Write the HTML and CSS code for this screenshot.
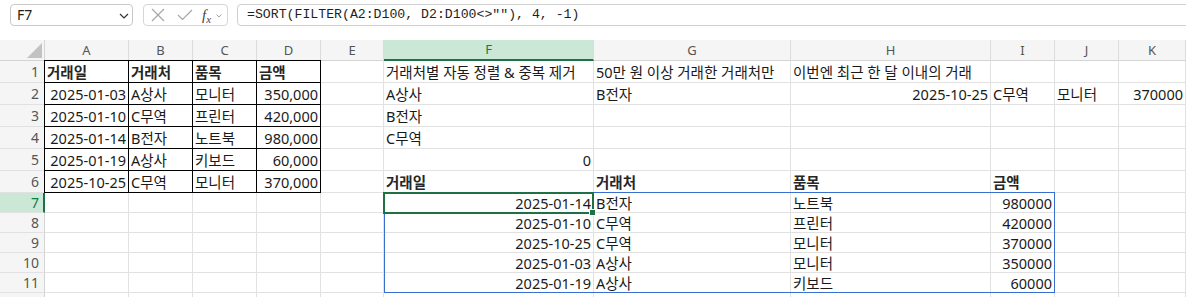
FILE: index.html
```html
<!DOCTYPE html>
<html lang="ko">
<head>
<meta charset="utf-8">
<title>Sheet</title>
<link rel="stylesheet" href="styles.css">
</head>
<body>
<div class="toolbar">
  <div class="namebox">
    <span class="ref">F7</span>
    <svg class="chev" width="10" height="6" viewBox="0 0 10 6"><path d="M1 1 L5 5 L9 1" fill="none" stroke="#333" stroke-width="1.2"/></svg>
  </div>
  <div class="fxbox">
    <svg class="ico" width="14" height="14" viewBox="0 0 14 14"><path d="M1 1 L13 13 M13 1 L1 13" fill="none" stroke="#a6a6a6" stroke-width="1.2"/></svg>
    <svg class="ico" width="16" height="12" viewBox="0 0 16 12"><path d="M1 6 L5.5 10.5 L15 1" fill="none" stroke="#a6a6a6" stroke-width="1.2"/></svg>
    <span class="fx"><span class="fx-f">f</span><span class="fx-x">x</span></span>
    <svg class="mini" width="6" height="4" viewBox="0 0 6 4"><path d="M0.5 0.5 L3 3 L5.5 0.5" fill="none" stroke="#a6a6a6" stroke-width="1"/></svg>
  </div>
  <div class="formula">=SORT(FILTER(A2:D100, D2:D100&lt;&gt;""), 4, -1)</div>
</div>

<div class="sheet">
  <div class="row head">
    <div class="corner"><svg width="15" height="15" viewBox="0 0 15 15"><path d="M15 0 L15 15 L0 15 Z" fill="#c2c2c2"/></svg></div>
    <div class="ch">A</div><div class="ch">B</div><div class="ch">C</div><div class="ch">D</div><div class="ch">E</div>
    <div class="ch active">F</div><div class="ch">G</div><div class="ch">H</div><div class="ch">I</div><div class="ch">J</div><div class="ch">K</div>
  </div>

  <div class="row tall">
    <div class="rh">1</div>
    <div class="cell b tb corner-tl">거래일</div>
    <div class="cell b tb top">거래처</div>
    <div class="cell b tb top">품목</div>
    <div class="cell b tb top">금액</div>
    <div class="cell"></div>
    <div class="cell">거래처별 자동 정렬 &amp; 중복 제거</div>
    <div class="cell">50만 원 이상 거래한 거래처만</div>
    <div class="cell">이번엔 최근 한 달 이내의 거래</div>
    <div class="cell"></div><div class="cell"></div><div class="cell"></div>
  </div>

  <div class="row tall">
    <div class="rh">2</div>
    <div class="cell n tb left">2025-01-03</div>
    <div class="cell tb">A상사</div>
    <div class="cell tb">모니터</div>
    <div class="cell n tb">350,000</div>
    <div class="cell"></div>
    <div class="cell">A상사</div>
    <div class="cell">B전자</div>
    <div class="cell n">2025-10-25</div>
    <div class="cell">C무역</div>
    <div class="cell">모니터</div>
    <div class="cell n">370000</div>
  </div>

  <div class="row tall">
    <div class="rh">3</div>
    <div class="cell n tb left">2025-01-10</div>
    <div class="cell tb">C무역</div>
    <div class="cell tb">프린터</div>
    <div class="cell n tb">420,000</div>
    <div class="cell"></div>
    <div class="cell">B전자</div>
    <div class="cell"></div><div class="cell"></div><div class="cell"></div><div class="cell"></div><div class="cell"></div>
  </div>

  <div class="row tall">
    <div class="rh">4</div>
    <div class="cell n tb left">2025-01-14</div>
    <div class="cell tb">B전자</div>
    <div class="cell tb">노트북</div>
    <div class="cell n tb">980,000</div>
    <div class="cell"></div>
    <div class="cell">C무역</div>
    <div class="cell"></div><div class="cell"></div><div class="cell"></div><div class="cell"></div><div class="cell"></div>
  </div>

  <div class="row tall">
    <div class="rh">5</div>
    <div class="cell n tb left">2025-01-19</div>
    <div class="cell tb">A상사</div>
    <div class="cell tb">키보드</div>
    <div class="cell n tb">60,000</div>
    <div class="cell"></div>
    <div class="cell n">0</div>
    <div class="cell"></div><div class="cell"></div><div class="cell"></div><div class="cell"></div><div class="cell"></div>
  </div>

  <div class="row tall">
    <div class="rh">6</div>
    <div class="cell n tb left">2025-10-25</div>
    <div class="cell tb">C무역</div>
    <div class="cell tb">모니터</div>
    <div class="cell n tb">370,000</div>
    <div class="cell"></div>
    <div class="cell b">거래일</div>
    <div class="cell b">거래처</div>
    <div class="cell b">품목</div>
    <div class="cell b">금액</div>
    <div class="cell"></div><div class="cell"></div>
  </div>

  <div class="row short">
    <div class="rh active">7</div>
    <div class="cell"></div><div class="cell"></div><div class="cell"></div><div class="cell"></div><div class="cell"></div>
    <div class="cell n">2025-01-14</div>
    <div class="cell">B전자</div>
    <div class="cell">노트북</div>
    <div class="cell n">980000</div>
    <div class="cell"></div><div class="cell"></div>
  </div>

  <div class="row short">
    <div class="rh">8</div>
    <div class="cell"></div><div class="cell"></div><div class="cell"></div><div class="cell"></div><div class="cell"></div>
    <div class="cell n">2025-01-10</div>
    <div class="cell">C무역</div>
    <div class="cell">프린터</div>
    <div class="cell n">420000</div>
    <div class="cell"></div><div class="cell"></div>
  </div>

  <div class="row short">
    <div class="rh">9</div>
    <div class="cell"></div><div class="cell"></div><div class="cell"></div><div class="cell"></div><div class="cell"></div>
    <div class="cell n">2025-10-25</div>
    <div class="cell">C무역</div>
    <div class="cell">모니터</div>
    <div class="cell n">370000</div>
    <div class="cell"></div><div class="cell"></div>
  </div>

  <div class="row short">
    <div class="rh">10</div>
    <div class="cell"></div><div class="cell"></div><div class="cell"></div><div class="cell"></div><div class="cell"></div>
    <div class="cell n">2025-01-03</div>
    <div class="cell">A상사</div>
    <div class="cell">모니터</div>
    <div class="cell n">350000</div>
    <div class="cell"></div><div class="cell"></div>
  </div>

  <div class="row short">
    <div class="rh">11</div>
    <div class="cell"></div><div class="cell"></div><div class="cell"></div><div class="cell"></div><div class="cell"></div>
    <div class="cell n">2025-01-19</div>
    <div class="cell">A상사</div>
    <div class="cell">키보드</div>
    <div class="cell n">60000</div>
    <div class="cell"></div><div class="cell"></div>
  </div>

  <div class="row stub">
    <div class="rh"></div>
    <div class="cell"></div><div class="cell"></div><div class="cell"></div><div class="cell"></div><div class="cell"></div>
    <div class="cell"></div><div class="cell"></div><div class="cell"></div><div class="cell"></div><div class="cell"></div><div class="cell"></div>
  </div>

  <div class="spill"></div>
  <div class="selection"><span class="handle"></span></div>
</div>
</body>
</html>
```

FILE: styles.css
```css
* { box-sizing: border-box; }
html, body {
  margin: 0;
  padding: 0;
  background: #ffffff;
  overflow: hidden;
}
body {
  width: 1186px;
  height: 297px;
  font-family: "Noto Sans", "Noto Sans CJK KR", sans-serif;
  color: #1a1a1a;
}

/* formula bar */
.toolbar {
  height: 40px;
  display: flex;
  align-items: flex-start;
  padding: 4px 0 0 10px;
}
.namebox {
  width: 123px;
  height: 22px;
  border: 1px solid #c9c9c9;
  border-radius: 4px;
  display: flex;
  align-items: center;
  justify-content: space-between;
  padding: 0 3px 0 6px;
}
.ref {
  font-size: 14px;
  line-height: 20px;
  color: #222;
}
.chev { margin-top: 1px; }
.fxbox {
  margin-left: 10px;
  width: 85px;
  height: 22px;
  border: 1px solid #d6d6d6;
  border-radius: 4px;
  display: flex;
  align-items: center;
  padding: 0 0 0 7px;
}
.ico { flex: none; }
.ico + .ico { margin-left: 12px; }
.fx {
  margin-left: 9px;
  font-family: "Liberation Serif", serif;
  font-style: italic;
  color: #444;
  display: flex;
  align-items: flex-end;
  line-height: 1;
}
.fx-f { font-size: 15px; }
.fx-x { font-size: 11px; position: relative; top: 2px; }
.mini { margin-left: 5px; margin-top: 2px; }
.formula {
  margin-left: 9px;
  flex: 1;
  margin-right: -20px;
  height: 22px;
  border: 1px solid #d0d0d0;
  border-radius: 4px;
  font-family: "Liberation Mono", "DejaVu Sans Mono", monospace;
  font-size: 13.2px;
  line-height: 20px;
  color: #1f1f1f;
  padding-left: 9px;
  white-space: pre;
}

/* sheet grid */
.sheet {
  position: relative;
}
.row {
  display: grid;
  grid-template-columns: 45px 84px 64px 64px 64px 63px 210px 197px 200px 64px 64px 1fr;
}
.head { height: 21px; }
.tall { height: 22px; }
.short { height: 20px; }
.stub { height: 4px; }

.corner {
  background: #f5f5f5;
  border-right: 1px solid #d4d4d4;
  border-bottom: 1px solid #d4d4d4;
  display: flex;
  align-items: flex-end;
  justify-content: flex-end;
  padding: 0 2px 2px 0;
}
.ch {
  background: #f5f5f5;
  border-right: 1px solid #dcdcdc;
  border-bottom: 1px solid #d4d4d4;
  font-size: 13px;
  color: #555;
  display: flex;
  align-items: center;
  justify-content: center;
  line-height: 1;
}
.ch.active {
  background: #cbe8d6;
  color: #107c41;
  border-bottom: 2px solid #1e7145;
}
.rh {
  background: #f5f5f5;
  border-right: 1px solid #d4d4d4;
  border-bottom: 1px solid #e1e1e1;
  font-size: 14px;
  color: #555;
  display: flex;
  align-items: center;
  justify-content: flex-end;
  padding-right: 5px;
  line-height: 1;
}
.rh.active {
  background: #cbe8d6;
  color: #107c41;
  border-right: 2px solid #1e7145;
  padding-right: 4px;
}
.stub .rh, .stub .cell { border-bottom: none; }

.cell {
  border-right: 1px solid #e1e1e1;
  border-bottom: 1px solid #e1e1e1;
  font-size: 14.5px;
  line-height: 20px;
  display: flex;
  align-items: flex-end;
  padding: 0 2px;
  white-space: nowrap;
  color: #1a1a1a;
}
.short .cell { line-height: 18px; }
.cell.n { justify-content: flex-end; }
.cell.b { font-weight: 700; color: #262626; }
.cell.tb {
  border-right-color: #000;
  border-bottom-color: #000;
}
.cell.left { box-shadow: -1px 0 0 #000; }
.cell.top { box-shadow: 0 -1px 0 #000; }
.cell.corner-tl { box-shadow: -1px 0 0 #000, 0 -1px 0 #000, -1px -1px 0 #000; }

/* overlays */
.spill {
  position: absolute;
  left: 384px;
  top: 152px;
  width: 671px;
  height: 101px;
  border: 1px solid #3a6fd2;
  pointer-events: none;
}
.selection {
  position: absolute;
  left: 383px;
  top: 152px;
  width: 211px;
  height: 22px;
  border: 2px solid #1e7145;
  pointer-events: none;
}
.handle {
  position: absolute;
  right: -4px;
  bottom: -4px;
  width: 7px;
  height: 7px;
  background: #1e7145;
  border: 1px solid #ffffff;
}
```
